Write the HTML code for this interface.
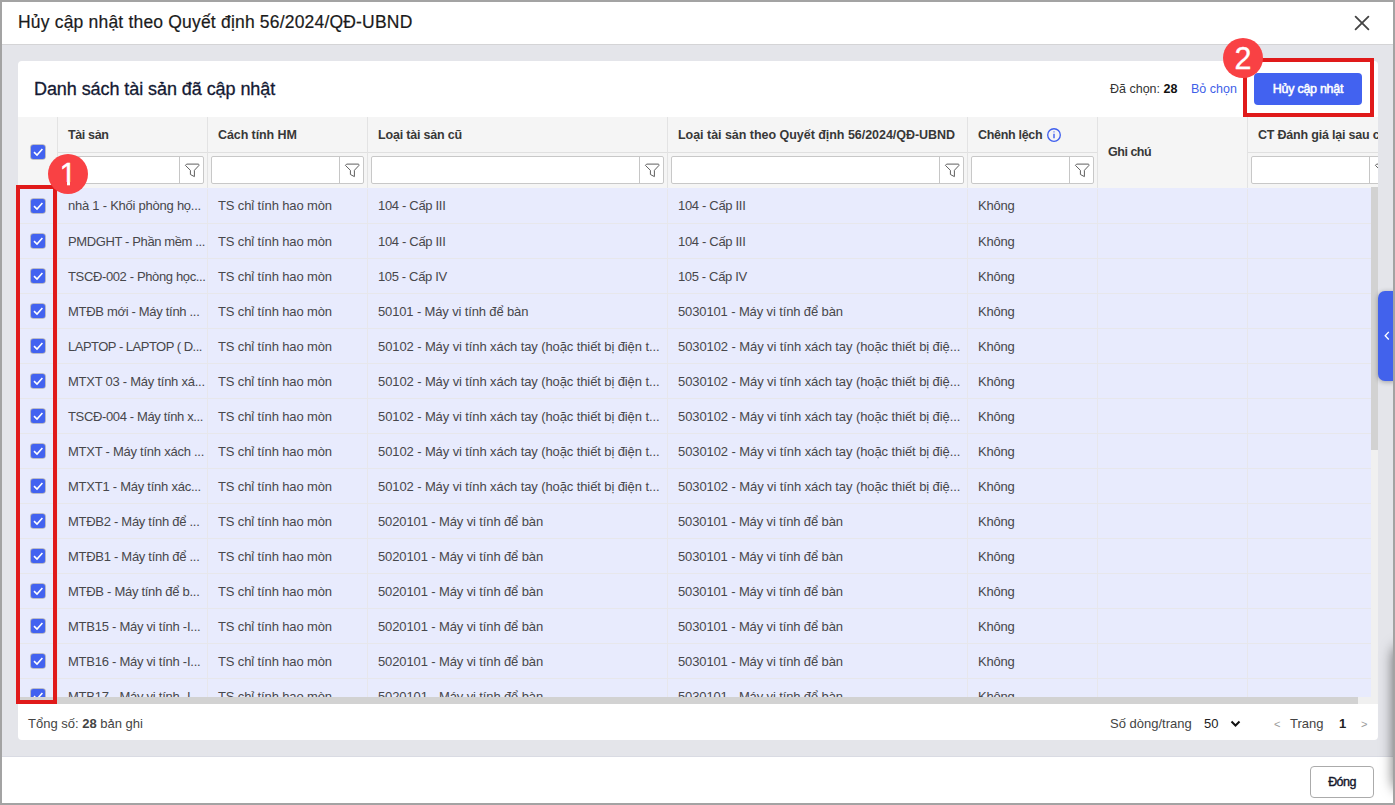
<!DOCTYPE html>
<html lang="vi">
<head>
<meta charset="utf-8">
<title>Hủy cập nhật theo Quyết định 56/2024/QĐ-UBND</title>
<style>
*{box-sizing:border-box;margin:0;padding:0}
html,body{width:1395px;height:805px;overflow:hidden;background:#e4e5ea;font-family:"Liberation Sans",sans-serif;color:#212121}
#frame{position:absolute;left:0;top:0;width:1395px;height:805px;border:2px solid #a3a3a3;pointer-events:none;z-index:50}
#titlebar{position:absolute;left:0;top:0;width:1395px;height:45px;background:#fff;border-bottom:1px solid #d4d4d6}
#titlebar h1{position:absolute;left:18px;top:11px;font-size:17.5px;font-weight:400;color:#1b1b1b;-webkit-text-stroke:.2px #1b1b1b;white-space:nowrap;line-height:22px}
#close{position:absolute;left:1353px;top:14px;width:18px;height:18px}
#card{position:absolute;left:18px;top:61px;width:1360px;height:679px;background:#fff;border-radius:4px;overflow:hidden}
#card h2{position:absolute;left:16px;top:17px;font-size:18px;font-weight:400;color:#141a33;-webkit-text-stroke:.3px #141a33;white-space:nowrap;line-height:22px}
#sel{position:absolute;left:1092px;top:20px;font-size:12.5px;color:#333;white-space:nowrap;line-height:16px}
#sel b{color:#111}
#unsel{position:absolute;left:1173px;top:20px;font-size:12.5px;color:#3f5fe8;white-space:nowrap;line-height:16px}
#btn{position:absolute;left:1236px;top:12px;width:108px;height:32px;background:#4262f0;color:#fff;border-radius:4px;font-size:12.5px;font-weight:400;-webkit-text-stroke:.5px #fff;text-align:center;line-height:32px;white-space:nowrap}
#grid{position:absolute;left:0;top:56px;width:1360px;height:587px;overflow:hidden;background:#f5f5f5}
.hc{position:absolute;top:0;height:71px;border-left:1px solid #e3e3e3}
.hc .t{position:absolute;left:10px;top:9px;font-size:12.5px;font-weight:700;color:#383838;white-space:nowrap;line-height:18px}
.hc .ln{position:absolute;left:0;right:0;top:35px;height:1px;background:#e0e0e0}
.hc .f{position:absolute;left:3px;right:3px;top:39px;height:28px;background:#fff;border:1px solid #c8c8c8;border-radius:2px}
.hc .f i{position:absolute;right:0;top:0;width:24px;height:26px;border-left:1px solid #c6c6c6}
.hc .f svg{position:absolute;right:3px;top:5px;width:16px;height:16px}
#rows{position:absolute;left:0;top:71px;width:1353px;height:509px;overflow:hidden;background:#e8ebfd}
.r{position:relative;height:35px;border-top:1px solid #e7e7eb;font-size:13px;color:#47474b;white-space:nowrap}
.r:first-child{border-top-color:transparent}
.r span{position:absolute;top:0;height:34px;line-height:36px;padding-left:10px;border-left:1px solid #e7e7ec;overflow:hidden;text-overflow:ellipsis}
.r:first-child span{line-height:34px}
.cb{position:absolute;width:14px;height:14px;background:#4262f0;border-radius:2.5px;box-shadow:0 0 0 .8px rgba(150,150,160,.75)}
.cb svg{position:absolute;left:1px;top:2px;width:12px;height:10px}

em{font-style:normal;display:inline-block;white-space:nowrap}
.r .cb{left:13px;top:10px}
.c1{left:39px;width:150px}.c2{left:189px;width:160px}.c3{left:349px;width:300px}.c4{left:649px;width:300px}.c5{left:949px;width:130px}.c6{left:1079px;width:150px}.c7{left:1229px;width:150px}
.info{position:absolute;left:69px;top:2px;width:14px;height:14px}
#vsb{position:absolute;left:1353px;top:70px;width:7px;height:510px;background:#f0f0f0}
#vsb b{position:absolute;left:0;top:0;width:7px;height:263px;background:#d2d2d2}
#hsb{position:absolute;left:0;top:580px;width:1360px;height:7px;background:#f0f0f0}
#hsb b{position:absolute;left:0;top:0;width:1340px;height:7px;background:#d2d2d2}
#foot{position:absolute;left:0;top:643px;width:1360px;height:36px;font-size:13px;color:#444;line-height:18px}
#foot div{position:absolute;top:11px;white-space:nowrap}
#bottombar{position:absolute;left:0;top:756px;width:1395px;height:49px;background:#fff;border-top:1px solid #d9dbe3}
#dong{position:absolute;left:1310px;top:9px;width:64px;height:32px;border:1px solid #ababab;border-radius:4px;font-size:12.5px;font-weight:400;color:#15182c;-webkit-text-stroke:.4px #15182c;text-align:center;line-height:30px;background:#fff}
#tab{position:absolute;left:1378px;top:291px;width:17px;height:90px;background:#4262ec;border-radius:7px 0 0 7px;box-shadow:0 1px 5px rgba(0,0,0,.3)}
#tab svg{position:absolute;left:5.5px;top:39.7px;width:6px;height:9.4px}
.red{position:absolute;border:4px solid #e01a1a;pointer-events:none}
.badge{position:absolute;width:40px;height:40px;border-radius:50%;background:#f94144;color:#fff;font-size:30.5px;line-height:41px;text-align:center;-webkit-text-stroke:.35px #fff}
.badge i{position:absolute;top:27.6px;height:5.4px;background:#f94144}
#shade{position:absolute;left:1396px;top:648px;width:30px;height:140px;border-radius:8px;box-shadow:0 0 13px 3px rgba(0,0,0,.55)}
</style>
</head>
<body>
<div id="titlebar"><h1><em style="letter-spacing:0.188px">Hủy cập nhật theo Quyết định 56/2024/QĐ-UBND</em></h1>
<svg id="close" viewBox="0 0 18 18"><path d="M2.6 2.6 L15.4 15.4 M15.4 2.6 L2.6 15.4" stroke="#444" stroke-width="1.8" fill="none" stroke-linecap="round"/></svg>
</div>
<div id="card">
<h2><em style="letter-spacing:-0.069px">Danh sách tài sản đã cập nhật</em></h2>
<div id="sel">Đã chọn: <b>28</b></div>
<div id="unsel">Bỏ chọn</div>
<div id="btn"><em style="letter-spacing:-0.276px">Hủy cập nhật</em></div>
<div id="grid">
<div class="hc" style="left:0;width:39px;border-left:0"><div class="cb" style="left:13px;top:28px"><svg viewBox="0 0 12 10"><path d="M2 5.2 L5 8.1 L10.4 2" fill="none" stroke="#fff" stroke-width="1.6"/></svg></div></div>
<div class="hc" id="h1" style="left:39px;width:150px"><div class="t"><em style="letter-spacing:-0.366px">Tài sản</em></div><div class="ln"></div><div class="f"><i></i><svg viewBox="0 0 16 16"><path d="M2.6 2.1 H14.3 Q14.9 2.1 14.9 2.8 V3.5 L10.4 8.3 V14.6 L6.4 12.5 V8.3 L1.4 3.4 Z" fill="none" stroke="#5e5e5e" stroke-width="1" stroke-linejoin="round"/></svg></div></div>
<div class="hc" id="h2" style="left:189px;width:160px"><div class="t"><em style="letter-spacing:-0.092px">Cách tính HM</em></div><div class="ln"></div><div class="f"><i></i><svg viewBox="0 0 16 16"><path d="M2.6 2.1 H14.3 Q14.9 2.1 14.9 2.8 V3.5 L10.4 8.3 V14.6 L6.4 12.5 V8.3 L1.4 3.4 Z" fill="none" stroke="#5e5e5e" stroke-width="1" stroke-linejoin="round"/></svg></div></div>
<div class="hc" id="h3" style="left:349px;width:300px"><div class="t"><em style="letter-spacing:-0.189px">Loại tài sản cũ</em></div><div class="ln"></div><div class="f"><i></i><svg viewBox="0 0 16 16"><path d="M2.6 2.1 H14.3 Q14.9 2.1 14.9 2.8 V3.5 L10.4 8.3 V14.6 L6.4 12.5 V8.3 L1.4 3.4 Z" fill="none" stroke="#5e5e5e" stroke-width="1" stroke-linejoin="round"/></svg></div></div>
<div class="hc" id="h4" style="left:649px;width:300px"><div class="t"><em style="letter-spacing:-0.033px">Loại tài sản theo Quyết định 56/2024/QĐ-UBND</em></div><div class="ln"></div><div class="f"><i></i><svg viewBox="0 0 16 16"><path d="M2.6 2.1 H14.3 Q14.9 2.1 14.9 2.8 V3.5 L10.4 8.3 V14.6 L6.4 12.5 V8.3 L1.4 3.4 Z" fill="none" stroke="#5e5e5e" stroke-width="1" stroke-linejoin="round"/></svg></div></div>
<div class="hc" id="h5" style="left:949px;width:130px"><div class="t"><em style="letter-spacing:-0.303px">Chênh lệch</em><svg class="info" viewBox="0 0 14 14"><circle cx="7" cy="7" r="6.3" fill="none" stroke="#3f5fee" stroke-width="1.35"/><path d="M7 5.7 V10.3" stroke="#4a68ee" stroke-width="1.5"/><path d="M7 3.3 V4.6" stroke="#8094f3" stroke-width="1.5"/></svg></div><div class="ln"></div><div class="f"><i></i><svg viewBox="0 0 16 16"><path d="M2.6 2.1 H14.3 Q14.9 2.1 14.9 2.8 V3.5 L10.4 8.3 V14.6 L6.4 12.5 V8.3 L1.4 3.4 Z" fill="none" stroke="#5e5e5e" stroke-width="1" stroke-linejoin="round"/></svg></div></div>
<div class="hc" id="h6" style="left:1079px;width:150px"><div class="t" style="top:26px"><em style="letter-spacing:-0.482px">Ghi chú</em></div></div>
<div class="hc" id="h7" style="left:1229px;width:150px"><div class="t"><em style="letter-spacing:-0.207px">CT Đánh giá lại sau c</em></div><div class="ln"></div><div class="f"><i></i><svg viewBox="0 0 16 16"><path d="M2.6 2.1 H14.3 Q14.9 2.1 14.9 2.8 V3.5 L10.4 8.3 V14.6 L6.4 12.5 V8.3 L1.4 3.4 Z" fill="none" stroke="#5e5e5e" stroke-width="1" stroke-linejoin="round"/></svg></div></div>
<div id="rows">
<div class="r"><div class="cb"><svg viewBox="0 0 12 10"><path d="M2 5.2 L5 8.1 L10.4 2" fill="none" stroke="#fff" stroke-width="1.6"/></svg></div><span class="c1"><em style="letter-spacing:-0.242px">nhà 1 - Khối phòng họ...</em></span><span class="c2"><em style="letter-spacing:-0.127px">TS chỉ tính hao mòn</em></span><span class="c3"><em style="letter-spacing:-0.316px">104 - Cấp III</em></span><span class="c4"><em style="letter-spacing:-0.316px">104 - Cấp III</em></span><span class="c5"><em style="letter-spacing:-0.221px">Không</em></span><span class="c6"></span><span class="c7"></span></div>
<div class="r"><div class="cb"><svg viewBox="0 0 12 10"><path d="M2 5.2 L5 8.1 L10.4 2" fill="none" stroke="#fff" stroke-width="1.6"/></svg></div><span class="c1"><em style="letter-spacing:-0.379px">PMDGHT - Phần mềm ...</em></span><span class="c2"><em style="letter-spacing:-0.127px">TS chỉ tính hao mòn</em></span><span class="c3"><em style="letter-spacing:-0.316px">104 - Cấp III</em></span><span class="c4"><em style="letter-spacing:-0.316px">104 - Cấp III</em></span><span class="c5"><em style="letter-spacing:-0.221px">Không</em></span><span class="c6"></span><span class="c7"></span></div>
<div class="r"><div class="cb"><svg viewBox="0 0 12 10"><path d="M2 5.2 L5 8.1 L10.4 2" fill="none" stroke="#fff" stroke-width="1.6"/></svg></div><span class="c1"><em style="letter-spacing:-0.368px">TSCĐ-002 - Phòng học...</em></span><span class="c2"><em style="letter-spacing:-0.127px">TS chỉ tính hao mòn</em></span><span class="c3"><em style="letter-spacing:-0.357px">105 - Cấp IV</em></span><span class="c4"><em style="letter-spacing:-0.357px">105 - Cấp IV</em></span><span class="c5"><em style="letter-spacing:-0.221px">Không</em></span><span class="c6"></span><span class="c7"></span></div>
<div class="r"><div class="cb"><svg viewBox="0 0 12 10"><path d="M2 5.2 L5 8.1 L10.4 2" fill="none" stroke="#fff" stroke-width="1.6"/></svg></div><span class="c1"><em style="letter-spacing:-0.309px">MTĐB mới - Máy tính ...</em></span><span class="c2"><em style="letter-spacing:-0.127px">TS chỉ tính hao mòn</em></span><span class="c3"><em style="letter-spacing:-0.143px">50101 - Máy vi tính để bàn</em></span><span class="c4"><em style="letter-spacing:-0.127px">5030101 - Máy vi tính để bàn</em></span><span class="c5"><em style="letter-spacing:-0.221px">Không</em></span><span class="c6"></span><span class="c7"></span></div>
<div class="r"><div class="cb"><svg viewBox="0 0 12 10"><path d="M2 5.2 L5 8.1 L10.4 2" fill="none" stroke="#fff" stroke-width="1.6"/></svg></div><span class="c1"><em style="letter-spacing:-0.506px">LAPTOP - LAPTOP ( D...</em></span><span class="c2"><em style="letter-spacing:-0.127px">TS chỉ tính hao mòn</em></span><span class="c3"><em style="letter-spacing:-0.103px">50102 - Máy vi tính xách tay (hoặc thiết bị điện t...</em></span><span class="c4"><em style="letter-spacing:-0.089px">5030102 - Máy vi tính xách tay (hoặc thiết bị điệ...</em></span><span class="c5"><em style="letter-spacing:-0.221px">Không</em></span><span class="c6"></span><span class="c7"></span></div>
<div class="r"><div class="cb"><svg viewBox="0 0 12 10"><path d="M2 5.2 L5 8.1 L10.4 2" fill="none" stroke="#fff" stroke-width="1.6"/></svg></div><span class="c1"><em style="letter-spacing:-0.252px">MTXT 03 - Máy tính xá...</em></span><span class="c2"><em style="letter-spacing:-0.127px">TS chỉ tính hao mòn</em></span><span class="c3"><em style="letter-spacing:-0.103px">50102 - Máy vi tính xách tay (hoặc thiết bị điện t...</em></span><span class="c4"><em style="letter-spacing:-0.089px">5030102 - Máy vi tính xách tay (hoặc thiết bị điệ...</em></span><span class="c5"><em style="letter-spacing:-0.221px">Không</em></span><span class="c6"></span><span class="c7"></span></div>
<div class="r"><div class="cb"><svg viewBox="0 0 12 10"><path d="M2 5.2 L5 8.1 L10.4 2" fill="none" stroke="#fff" stroke-width="1.6"/></svg></div><span class="c1"><em style="letter-spacing:-0.360px">TSCĐ-004 - Máy tính x...</em></span><span class="c2"><em style="letter-spacing:-0.127px">TS chỉ tính hao mòn</em></span><span class="c3"><em style="letter-spacing:-0.103px">50102 - Máy vi tính xách tay (hoặc thiết bị điện t...</em></span><span class="c4"><em style="letter-spacing:-0.089px">5030102 - Máy vi tính xách tay (hoặc thiết bị điệ...</em></span><span class="c5"><em style="letter-spacing:-0.221px">Không</em></span><span class="c6"></span><span class="c7"></span></div>
<div class="r"><div class="cb"><svg viewBox="0 0 12 10"><path d="M2 5.2 L5 8.1 L10.4 2" fill="none" stroke="#fff" stroke-width="1.6"/></svg></div><span class="c1"><em style="letter-spacing:-0.250px">MTXT - Máy tính xách ...</em></span><span class="c2"><em style="letter-spacing:-0.127px">TS chỉ tính hao mòn</em></span><span class="c3"><em style="letter-spacing:-0.103px">50102 - Máy vi tính xách tay (hoặc thiết bị điện t...</em></span><span class="c4"><em style="letter-spacing:-0.089px">5030102 - Máy vi tính xách tay (hoặc thiết bị điệ...</em></span><span class="c5"><em style="letter-spacing:-0.221px">Không</em></span><span class="c6"></span><span class="c7"></span></div>
<div class="r"><div class="cb"><svg viewBox="0 0 12 10"><path d="M2 5.2 L5 8.1 L10.4 2" fill="none" stroke="#fff" stroke-width="1.6"/></svg></div><span class="c1"><em style="letter-spacing:-0.249px">MTXT1 - Máy tính xác...</em></span><span class="c2"><em style="letter-spacing:-0.127px">TS chỉ tính hao mòn</em></span><span class="c3"><em style="letter-spacing:-0.103px">50102 - Máy vi tính xách tay (hoặc thiết bị điện t...</em></span><span class="c4"><em style="letter-spacing:-0.089px">5030102 - Máy vi tính xách tay (hoặc thiết bị điệ...</em></span><span class="c5"><em style="letter-spacing:-0.221px">Không</em></span><span class="c6"></span><span class="c7"></span></div>
<div class="r"><div class="cb"><svg viewBox="0 0 12 10"><path d="M2 5.2 L5 8.1 L10.4 2" fill="none" stroke="#fff" stroke-width="1.6"/></svg></div><span class="c1"><em style="letter-spacing:-0.284px">MTĐB2 - Máy tính để ...</em></span><span class="c2"><em style="letter-spacing:-0.127px">TS chỉ tính hao mòn</em></span><span class="c3"><em style="letter-spacing:-0.120px">5020101 - Máy vi tính để bàn</em></span><span class="c4"><em style="letter-spacing:-0.127px">5030101 - Máy vi tính để bàn</em></span><span class="c5"><em style="letter-spacing:-0.221px">Không</em></span><span class="c6"></span><span class="c7"></span></div>
<div class="r"><div class="cb"><svg viewBox="0 0 12 10"><path d="M2 5.2 L5 8.1 L10.4 2" fill="none" stroke="#fff" stroke-width="1.6"/></svg></div><span class="c1"><em style="letter-spacing:-0.284px">MTĐB1 - Máy tính để ...</em></span><span class="c2"><em style="letter-spacing:-0.127px">TS chỉ tính hao mòn</em></span><span class="c3"><em style="letter-spacing:-0.120px">5020101 - Máy vi tính để bàn</em></span><span class="c4"><em style="letter-spacing:-0.127px">5030101 - Máy vi tính để bàn</em></span><span class="c5"><em style="letter-spacing:-0.221px">Không</em></span><span class="c6"></span><span class="c7"></span></div>
<div class="r"><div class="cb"><svg viewBox="0 0 12 10"><path d="M2 5.2 L5 8.1 L10.4 2" fill="none" stroke="#fff" stroke-width="1.6"/></svg></div><span class="c1"><em style="letter-spacing:-0.284px">MTĐB - Máy tính để b...</em></span><span class="c2"><em style="letter-spacing:-0.127px">TS chỉ tính hao mòn</em></span><span class="c3"><em style="letter-spacing:-0.120px">5020101 - Máy vi tính để bàn</em></span><span class="c4"><em style="letter-spacing:-0.127px">5030101 - Máy vi tính để bàn</em></span><span class="c5"><em style="letter-spacing:-0.221px">Không</em></span><span class="c6"></span><span class="c7"></span></div>
<div class="r"><div class="cb"><svg viewBox="0 0 12 10"><path d="M2 5.2 L5 8.1 L10.4 2" fill="none" stroke="#fff" stroke-width="1.6"/></svg></div><span class="c1"><em style="letter-spacing:-0.253px">MTB15 - Máy vi tính -I...</em></span><span class="c2"><em style="letter-spacing:-0.127px">TS chỉ tính hao mòn</em></span><span class="c3"><em style="letter-spacing:-0.120px">5020101 - Máy vi tính để bàn</em></span><span class="c4"><em style="letter-spacing:-0.127px">5030101 - Máy vi tính để bàn</em></span><span class="c5"><em style="letter-spacing:-0.221px">Không</em></span><span class="c6"></span><span class="c7"></span></div>
<div class="r"><div class="cb"><svg viewBox="0 0 12 10"><path d="M2 5.2 L5 8.1 L10.4 2" fill="none" stroke="#fff" stroke-width="1.6"/></svg></div><span class="c1"><em style="letter-spacing:-0.253px">MTB16 - Máy vi tính -I...</em></span><span class="c2"><em style="letter-spacing:-0.127px">TS chỉ tính hao mòn</em></span><span class="c3"><em style="letter-spacing:-0.120px">5020101 - Máy vi tính để bàn</em></span><span class="c4"><em style="letter-spacing:-0.127px">5030101 - Máy vi tính để bàn</em></span><span class="c5"><em style="letter-spacing:-0.221px">Không</em></span><span class="c6"></span><span class="c7"></span></div>
<div class="r"><div class="cb"><svg viewBox="0 0 12 10"><path d="M2 5.2 L5 8.1 L10.4 2" fill="none" stroke="#fff" stroke-width="1.6"/></svg></div><span class="c1"><em style="letter-spacing:-0.253px">MTB17 - Máy vi tính -I...</em></span><span class="c2"><em style="letter-spacing:-0.127px">TS chỉ tính hao mòn</em></span><span class="c3"><em style="letter-spacing:-0.120px">5020101 - Máy vi tính để bàn</em></span><span class="c4"><em style="letter-spacing:-0.127px">5030101 - Máy vi tính để bàn</em></span><span class="c5"><em style="letter-spacing:-0.221px">Không</em></span><span class="c6"></span><span class="c7"></span></div>
</div>
<div id="vsb"><b></b></div><div id="hsb"><b></b></div>
</div>
<div id="foot">
<div style="left:10px">Tổng số: <b>28</b> bản ghi</div>
<div style="left:1092px">Số dòng/trang</div>
<div style="left:1186px;color:#222">50</div>
<svg style="position:absolute;left:1212px;top:16px;width:11px;height:8px" viewBox="0 0 11 8"><path d="M1.5 1.5 L5.5 5.5 L9.5 1.5" fill="none" stroke="#111" stroke-width="2"/></svg>
<div style="left:1256px;color:#9a9a9a;font-size:11px">&lt;</div>
<div style="left:1272px">Trang</div>
<div style="left:1321px;color:#222"><b>1</b></div>
<div style="left:1343px;color:#9a9a9a;font-size:11px">&gt;</div>
</div>
</div>
<div id="bottombar"><div id="dong"><em style="letter-spacing:-0.540px">Đóng</em></div></div>
<div id="tab"><svg viewBox="0 0 7 11"><path d="M5.6 1 L1.4 5.5 L5.6 10" fill="none" stroke="#fff" stroke-width="1.6"/></svg></div>
<div id="shade"></div>
<div class="red" style="left:16px;top:185px;width:41px;height:519px"></div>
<div class="red" style="left:1243px;top:58px;width:131px;height:59px"></div>
<div class="badge" style="left:48px;top:154px">1<i style="left:11px;width:7.9px"></i><i style="left:22.1px;width:7.4px"></i></div>
<div class="badge" style="left:1223px;top:38px">2</div>
<div id="frame"></div>
</body>
</html>
